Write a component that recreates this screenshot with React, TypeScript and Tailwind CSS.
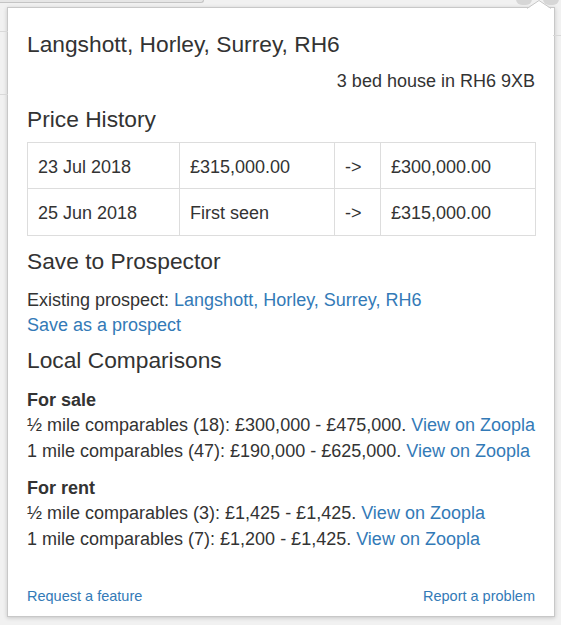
import React from 'react';

const history = [
  { date: '23 Jul 2018', from: '£315,000.00', to: '£300,000.00' },
  { date: '25 Jun 2018', from: 'First seen', to: '£315,000.00' },
];

const Link: React.FC<{ children: React.ReactNode }> = ({ children }) => (
  <a href="#" className="text-[#337ab7] no-underline">
    {children}
  </a>
);

const Cell: React.FC<{ children: React.ReactNode }> = ({ children }) => (
  <td className="border border-[#dddddd] px-[10px] pt-[12px] pb-[8px] leading-[25.7px] align-top">{children}</td>
);

export default function App() {
  return (
    <div className="relative w-[561px] h-[625px] overflow-hidden bg-[#f1f1f1] pl-[7px] pt-[7px] font-['Liberation_Sans',Arial,sans-serif] text-[#333]">
      {/* browser chrome peeking out behind the popup */}
      <div className="absolute left-0 top-0 w-[204px] h-[3px] bg-[#e6e6e6] border-b border-r border-[#c4c4c4] rounded-br-[4px]" />
      <div className="absolute left-0 top-[31px] w-[8px] h-px bg-[#d9d9d9]" />
      <div className="absolute left-0 top-[94px] w-[8px] h-px bg-[#d9d9d9]" />
      <div className="absolute right-0 top-[35px] w-[8px] h-px bg-[#d9d9d9]" />
      <div className="absolute left-[516px] top-[-7px] w-[16px] h-[12px] rounded-full bg-[#d6d6d6]" />
      <div className="absolute left-[543px] top-[-7px] w-[16px] h-[12px] rounded-full bg-[#d6d6d6]" />

      <div className="flex flex-col w-[548px] h-[610px] bg-white border border-[#c8c8c8] shadow-[0_1px_4px_rgba(0,0,0,0.18)] px-[19px] pt-[24px] pb-[10px]">
        <h1 className="text-[22.75px] leading-[25px] font-normal">Langshott, Horley, Surrey, RH6</h1>
        <div className="mt-[12px] text-right text-[18px] leading-[25.7px]">3 bed house in RH6 9XB</div>

        <h2 className="mt-[12px] text-[22.75px] leading-[25px] font-normal">Price History</h2>
        <table className="mt-[10px] w-[508px] table-fixed border-collapse text-[18px]">
          <colgroup>
            <col className="w-[152px]" />
            <col className="w-[155px]" />
            <col className="w-[46px]" />
            <col className="w-[155px]" />
          </colgroup>
          <tbody>
            {history.map((row) => (
              <tr key={row.date}>
                <Cell>{row.date}</Cell>
                <Cell>{row.from}</Cell>
                <Cell>-&gt;</Cell>
                <Cell>{row.to}</Cell>
              </tr>
            ))}
          </tbody>
        </table>

        <h2 className="mt-[13px] text-[22.75px] leading-[25px] font-normal">Save to Prospector</h2>
        <div className="mt-[13.5px] text-[18px] leading-[25.7px]">
          <div>
            Existing prospect: <Link>Langshott, Horley, Surrey, RH6</Link>
          </div>
          <div>
            <Link>Save as a prospect</Link>
          </div>
        </div>

        <h2 className="mt-[9px] text-[22.75px] leading-[25px] font-normal">Local Comparisons</h2>
        <div className="mt-[14.5px] text-[18px] leading-[25.7px]">
          <div className="font-bold">For sale</div>
          <div>
            ½ mile comparables (18): £300,000 - £475,000. <Link>View on Zoopla</Link>
          </div>
          <div>
            1 mile comparables (47): £190,000 - £625,000. <Link>View on Zoopla</Link>
          </div>
          <div className="mt-[11px] font-bold">For rent</div>
          <div>
            ½ mile comparables (3): £1,425 - £1,425. <Link>View on Zoopla</Link>
          </div>
          <div>
            1 mile comparables (7): £1,200 - £1,425. <Link>View on Zoopla</Link>
          </div>
        </div>

        <div className="mt-auto flex justify-between text-[14.5px] leading-[20px]">
          <Link>Request a feature</Link>
          <Link>Report a problem</Link>
        </div>
      </div>

      {/* popup arrow */}
      <svg className="absolute left-[527px] top-0" width="24" height="9" viewBox="0 0 24 9">
        <polygon points="0,9 12,0.5 24,9" fill="#ffffff" />
        <polyline points="0,8.5 12,0.5 24,8.5" fill="none" stroke="#c8c8c8" strokeWidth="1" />
      </svg>
    </div>
  );
}
